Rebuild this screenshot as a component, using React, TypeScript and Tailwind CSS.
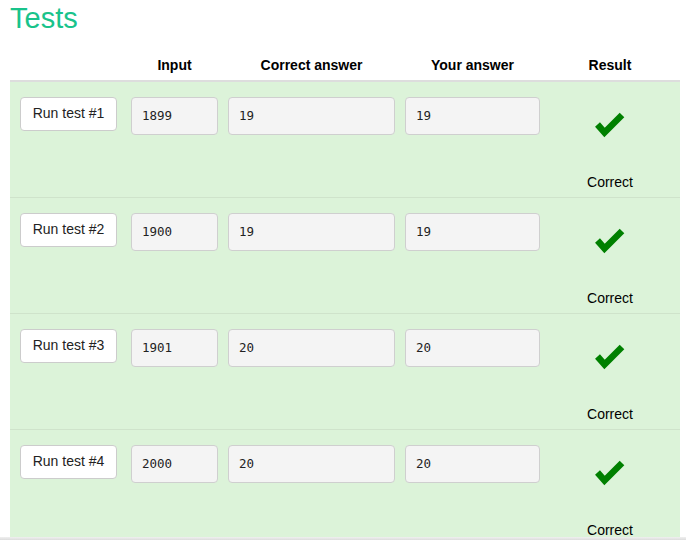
import React from "react";

const tests = [
  { n: 1, input: "1899", correct: "19", yours: "19" },
  { n: 2, input: "1900", correct: "19", yours: "19" },
  { n: 3, input: "1901", correct: "20", yours: "20" },
  { n: 4, input: "2000", correct: "20", yours: "20" },
];

function Check() {
  return (
    <svg width="30" height="27" viewBox="0 0 30 27" className="block">
      <polyline
        points="2.5,13.5 9.5,21.5 27,4"
        fill="none"
        stroke="#008000"
        strokeWidth="6.5"
        strokeLinecap="butt"
        strokeLinejoin="miter"
      />
    </svg>
  );
}

function Field({ value, w }: { value: string; w: string }) {
  return (
    <div
      className={`${w} h-[38px] shrink-0 rounded-[4px] border border-[#cfcfcf] bg-[#f4f4f4] pl-[10px] flex items-center text-[12.5px] text-[#222]`}
      style={{ fontFamily: '"DejaVu Sans Mono", monospace' }}
    >
      {value}
    </div>
  );
}

export default function App() {
  return (
    <div
      className="w-[686px] h-[540px] overflow-hidden bg-white text-black"
      style={{ fontFamily: '"Liberation Sans", Arial, sans-serif' }}
    >
      <h1 className="ml-[10px] h-[36px] leading-[37px] text-[29px] text-[#19c38b]">Tests</h1>
      <div className="ml-[10px] w-[670px]">
        <div className="flex items-end h-[46px] pb-[5px] border-b-2 border-[#dddddd] text-[14px] font-bold leading-[20px]">
          <div className="w-[121px] shrink-0" />
          <div className="w-[87px] shrink-0 text-center">Input</div>
          <div className="w-[10px] shrink-0" />
          <div className="w-[167px] shrink-0 text-center">Correct answer</div>
          <div className="w-[10px] shrink-0" />
          <div className="w-[135px] shrink-0 text-center">Your answer</div>
          <div className="w-[140px] shrink-0 text-center">Result</div>
        </div>
        {tests.map((t) => (
          <div
            key={t.n}
            className="flex items-start h-[116px] pt-[15px] bg-[#dcf3d9] border-b border-[#cfe3cb]"
          >
            <div className="w-[121px] shrink-0 pl-[10px]">
              <div className="w-[97px] h-[34px] rounded-[4px] border border-[#cccccc] bg-white flex items-center justify-center text-[14px] text-[#222] pb-[2px]">
                Run test #{t.n}
              </div>
            </div>
            <Field value={t.input} w="w-[87px]" />
            <div className="w-[10px] shrink-0" />
            <Field value={t.correct} w="w-[167px]" />
            <div className="w-[10px] shrink-0" />
            <Field value={t.yours} w="w-[135px]" />
            <div className="w-[140px] shrink-0 flex flex-col items-center pt-[14px]">
              <Check />
              <div className="mt-[34px] text-[14px] leading-[20px]">Correct</div>
            </div>
          </div>
        ))}
      </div>
      <div className="fixed left-0 right-0 bottom-0 h-[3px] bg-gradient-to-b from-[#f0f0f0] to-[#dcdcdc]" />
    </div>
  );
}
